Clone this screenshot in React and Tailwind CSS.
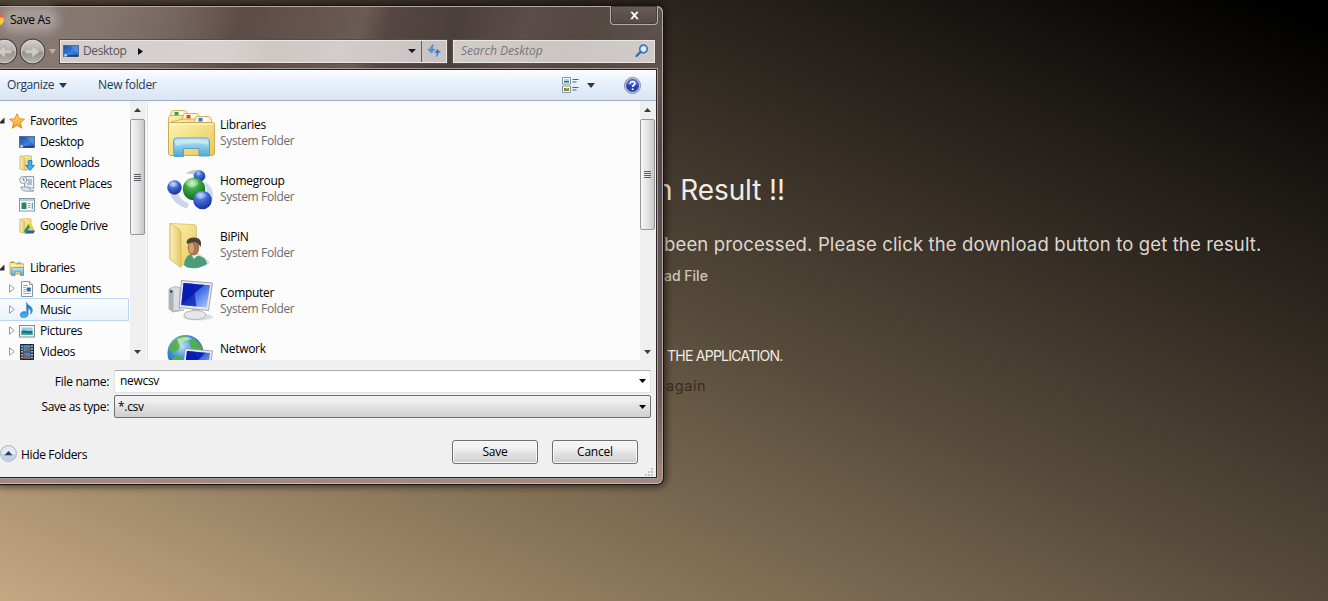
import React from "react";

const Gradients = () => (
  <svg width="0" height="0" className="absolute">
    <defs>
      <linearGradient id="folder" x1="0" y1="0" x2="1" y2="1">
        <stop offset="0" stopColor="#fdf3b4" />
        <stop offset="1" stopColor="#e9c854" />
      </linearGradient>
      <linearGradient id="folderSide" x1="0" y1="0" x2="1" y2="0">
        <stop offset="0" stopColor="#fbf0b8" />
        <stop offset="1" stopColor="#e5c768" />
      </linearGradient>
      <linearGradient id="stand" x1="0" y1="0" x2="0" y2="1">
        <stop offset="0" stopColor="#c3e6f6" />
        <stop offset=".5" stopColor="#86c8e8" />
        <stop offset="1" stopColor="#4fa6d4" />
      </linearGradient>
      <linearGradient id="screen" x1="0" y1="0" x2="1" y2="1">
        <stop offset="0" stopColor="#1430c8" />
        <stop offset=".42" stopColor="#0a1fb4" />
        <stop offset=".46" stopColor="#3c68e4" />
        <stop offset="1" stopColor="#b4d0fa" />
      </linearGradient>
      <linearGradient id="desk" x1="0" y1="0" x2="1" y2="1">
        <stop offset="0" stopColor="#1c4d9e" />
        <stop offset=".6" stopColor="#3f80dc" />
        <stop offset="1" stopColor="#1b4fae" />
      </linearGradient>
      <radialGradient id="blueBall" cx=".4" cy=".25" r=".75">
        <stop offset="0" stopColor="#b4ccf8" />
        <stop offset=".35" stopColor="#4a74dc" />
        <stop offset="1" stopColor="#16309c" />
      </radialGradient>
      <radialGradient id="greenBall" cx=".42" cy=".25" r=".75">
        <stop offset="0" stopColor="#c4f0b8" />
        <stop offset=".35" stopColor="#3fae48" />
        <stop offset="1" stopColor="#0b6a1c" />
      </radialGradient>
      <radialGradient id="globe" cx=".4" cy=".3" r=".75">
        <stop offset="0" stopColor="#b6e4fa" />
        <stop offset=".5" stopColor="#3a8ad4" />
        <stop offset="1" stopColor="#154a96" />
      </radialGradient>
      <linearGradient id="note" x1="0" y1="0" x2="0" y2="1">
        <stop offset="0" stopColor="#1668b8" />
        <stop offset="1" stopColor="#4cb4ee" />
      </linearGradient>
      <linearGradient id="star" x1="0" y1="0" x2="0" y2="1">
        <stop offset="0" stopColor="#ffe27a" />
        <stop offset="1" stopColor="#f79a1c" />
      </linearGradient>
      <linearGradient id="knob" x1="0" y1="0" x2="0" y2="1">
        <stop offset="0" stopColor="#d4d0ce" />
        <stop offset=".48" stopColor="#b4afac" />
        <stop offset=".52" stopColor="#938c89" />
        <stop offset="1" stopColor="#bdb7b4" />
      </linearGradient>
    </defs>
  </svg>
);

const Small = ({ children }) => (
  <svg width="16" height="16" viewBox="0 0 16 16" className="shrink-0">{children}</svg>
);

const StarIcon = () => (
  <Small>
    <path d="M8 .8 10.1 5.7 15.5 6.2 11.4 9.8 12.7 15.2 8 12.3 3.3 15.2 4.6 9.8 .5 6.2 5.9 5.7Z" fill="url(#star)" stroke="#d9811e" strokeWidth=".9" strokeLinejoin="round" />
  </Small>
);
const DesktopIcon = () => (
  <Small>
    <rect x=".5" y="2.5" width="15" height="11" fill="url(#desk)" stroke="#4a5f80" strokeWidth=".8" />
    <path d="M1 12.3h14v1.2H1z" fill="#18305c" />
    <path d="M8 3h7v8C12 9 10 6 8 3Z" fill="#69a5f0" opacity=".45" />
    <circle cx="2.6" cy="12.2" r="1.5" fill="#cfe3f4" stroke="#4c85b8" strokeWidth=".6" />
  </Small>
);
const DownloadsIcon = () => (
  <Small>
    <path d="M1 1.2 8 .6 12.5 1v13L7 15.3 1 14Z" fill="url(#folder)" stroke="#c9a84a" strokeWidth=".6" />
    <path d="M1 1.2 6 3v12.4L1 14Z" fill="url(#folderSide)" stroke="#cdaf58" strokeWidth=".5" />
    <path d="M9.3 5.500h3.600v5h2.600l-4.400 5-4.400-5h2.600Z" fill="#45aaf0" stroke="#1a6fc0" strokeWidth=".8" strokeLinejoin="round" />
  </Small>
);
const RecentIcon = () => (
  <Small>
    <path d="M5.500.6h9.200v11.500H5.500z" fill="#eef2f6" stroke="#7a8c9e" strokeWidth=".9" />
    <path d="M8 4h5M9 6h4M8 8h5" stroke="#5f8cc0" />
    <path d="M2 11h8c0 3 2 4 5 3.700-1 .7-9 .7-10.500 0C3 14 2 13 2 11Z" fill="#e1e6ec" stroke="#7a8c9e" strokeWidth=".8" />
    <circle cx="4.200" cy="4" r="3.500" fill="#f3f6f9" stroke="#7f8d9c" strokeWidth=".9" />
    <path d="M4.200 2v2.200h1.700" stroke="#4a5a6e" fill="none" strokeWidth=".8" />
  </Small>
);
const OneDriveIcon = () => (
  <Small>
    <rect x=".5" y="1.500" width="15" height="12.500" fill="#fbfdfd" stroke="#8197a4" />
    <path d="M1 2h14v2H1z" fill="#b9cbd6" />
    <path d="M2.500 5.500h5v6.500h-5z" fill="#2f7f6d" />
    <path d="M9 6.500h2.500M9 8.500h2.500M9 10.500h2.500" stroke="#7fa89e" />
    <path d="M13.300 5.500v6.500" stroke="#4d86a8" />
  </Small>
);
const GoogleDriveIcon = () => (
  <Small>
    <path d="M1 1.200 8 .6 12 1v13L7 15.300 1 14Z" fill="url(#folder)" stroke="#c9a84a" strokeWidth=".6" />
    <path d="M1 1.200 5.500 3v12.300L1 14Z" fill="url(#folderSide)" stroke="#cdaf58" strokeWidth=".5" />
    <path d="M9.500 6 5 13l1.800 2.600L11 9Z" fill="#1f9d58" />
    <path d="M9.500 6h2.800L16 12.500h-3.200Z" fill="#f7cb27" />
    <path d="M8 12.500h8l-1.600 3.100H6.600Z" fill="#2f55c8" />
  </Small>
);
const LibrariesSmallIcon = () => (
  <Small>
    <path d="M1 2.500h5l1 1.300h7.500V14H1Z" fill="url(#folder)" stroke="#bd9b40" strokeWidth=".8" />
    <path d="M2.200 1.500h2.500v1.400H2.200z" fill="#58a858" />
    <path d="M8 2.400h4v1.400H8z" fill="#6aa4dc" />
    <path d="M1 5.500h13.500" stroke="#fdf6cc" />
    <path d="M2.500 9c0-1 .6-1.500 1.500-1.500h9c1 0 1.500.6 1.500 1.500v6.500h-3v-4.200H6v4.200H2.500Z" fill="url(#stand)" stroke="#4296c4" strokeWidth=".7" />
  </Small>
);
const DocumentsIcon = () => (
  <Small>
    <path d="M2.500.5h8l3 3v12h-11Z" fill="#fdfefe" stroke="#75889a" strokeWidth=".9" />
    <path d="M10.500.5v3h3" fill="#dce6ee" stroke="#75889a" strokeWidth=".8" />
    <path d="M4.300 4.500h4.500M4.300 6.500h2.500M4.300 8.500h2.500M4.300 10.500h2.500M4.300 12.500h7.500" stroke="#8497b4" strokeWidth=".9" />
    <path d="M7.700 6.500h4v4h-4z" fill="#3064a8" />
  </Small>
);
const MusicIcon = () => (
  <Small>
    <path d="M7.600.4c.6 3.300 5.800 3.600 5.800 7.600 0 1.900-.9 3.300-1.900 4.200.8-2.800.3-4.700-2.300-5.900v5.900c0 2-1.800 3.600-4.400 3.600-2.400 0-3.700-1.300-3.700-2.900 0-2 1.900-3.500 4.300-3.500.9 0 1.600.2 2.200.5Z" fill="url(#note)" stroke="#1d78c4" strokeWidth=".5" />
  </Small>
);
const PicturesIcon = () => (
  <Small>
    <rect x=".5" y="2.500" width="15" height="11.500" fill="#fafcfd" stroke="#7d8b96" />
    <path d="M2.500 4.500h11v7.500h-11z" fill="#8fd0ee" />
    <path d="M2.500 8c3-1.500 6 1.200 11-.5V12h-11Z" fill="#1d7088" />
    <path d="M2.500 10.300c4-1 7 .5 11 0V12h-11Z" fill="#46a88c" />
  </Small>
);
const VideosIcon = () => (
  <Small>
    <path d="M1.500.5h13v15h-13z" fill="#2d3742" stroke="#1b242e" />
    <path d="M4.500 1h7v6.500h-7zM4.500 8.500h7V15h-7z" fill="#3f8fcc" />
    <path d="M5 2.500c2 3 4-1 6 2v3H8Zm0 7c3 0 3 4 6 2V15H5Z" fill="#8a5f58" />
    <path d="M3 1.500v14M13 1.500v14" stroke="#eef2f5" strokeWidth="1.300" strokeDasharray="1.500 1.300" />
  </Small>
);

const Big = ({ children }) => (
  <svg width="48" height="48" viewBox="0 0 48 48" className="mt-px shrink-0">{children}</svg>
);
const Tab = ({ x, y, c }) => (
  <g>
    <path d={`M${x} ${y + 6}l1.500-5q.5-1 2-1h11q1.500 0 2 1l1.500 5z`} fill="#fbf2bd" stroke="#c5a245" strokeWidth=".8" />
    <rect x={x + 4} y={y + 1.5} width="9" height="3.500" fill="#fff" />
    <rect x={x + 4.5} y={y + 1.5} width="4" height="3.500" fill={c} />
  </g>
);
const LibrariesIcon = () => (
  <Big>
    <Tab x={3} y={0.5} c="#3d9a3f" />
    <path d="M1.500 8.500q0-3 2-3h18v38h-20Z" fill="url(#folder)" stroke="#c5a245" strokeWidth=".8" />
    <Tab x={15} y={3.5} c="#d24534" />
    <path d="M16 9h16v36H4V12Z" fill="url(#folder)" stroke="#c5a245" strokeWidth=".8" />
    <Tab x={27} y={6.5} c="#3479cc" />
    <path d="M1.500 14.500q0-2 2-2h42q2 0 2 2V43q0 2.500-3 2.500H3.500q-2 0-2-2Z" fill="url(#folder)" stroke="#c9a548" strokeWidth=".9" />
    <path d="M2.500 14h44" stroke="#fffbe0" />
    <path d="M6.500 31q0-3 3-3h29.500q3.500 0 3.500 3.500V46H32V38.500H16.500V46.500H7Z" fill="url(#stand)" stroke="#4ba0cc" strokeWidth=".9" />
    <path d="M8 31q14-3 33 0v4q-12-4-32 1Z" fill="#fff" opacity=".35" />
  </Big>
);
const HomegroupIcon = () => (
  <Big>
    <g transform="translate(0 1.500)">
      <path d="M2 20C2 31 10 38 20 41L22 36C14 33 9 27 11 20Z" fill="#b9c6e0" opacity=".7" />
      <path d="M18 6Q33-3 39 10L32 14Q30 5 18 6Z" fill="#b4bdce" opacity=".8" />
      <path d="M37 14Q49 20 45 34L38 34Q42 24 37 14Z" fill="#c4d0e6" opacity=".75" />
      <circle cx="32.500" cy="8.500" r="5.800" fill="url(#blueBall)" />
      <circle cx="7.500" cy="20" r="7.200" fill="url(#blueBall)" />
      <circle cx="27" cy="21.500" r="11.200" fill="url(#greenBall)" />
      <circle cx="35.500" cy="32.500" r="9.300" fill="url(#blueBall)" />
      <ellipse cx="25" cy="15.500" rx="6.500" ry="4" fill="#fff" opacity=".3" />
      <ellipse cx="34" cy="28" rx="5.500" ry="3" fill="#fff" opacity=".28" />
      <ellipse cx="6.500" cy="17" rx="4.200" ry="2.500" fill="#fff" opacity=".28" />
    </g>
  </Big>
);
const UserFolderIcon = () => (
  <Big>
    <path d="M22 40Q38 48 43 40L30 30Z" fill="#b9bdba" opacity=".5" />
    <path d="M3 1.500 27 2.500Q29.500 3 29.500 5V38L13 44 3 37Z" fill="url(#folder)" stroke="#d3b55e" strokeWidth=".7" />
    <path d="M3 1.500 12 7Q14 9 14 12V45.500L4.500 38.500Q3 37 3 35Z" fill="url(#folderSide)" stroke="#cdae55" strokeWidth=".7" />
    <path d="M17 43Q18 33 25 32L32 34Q39 35 40 42Q33 47 24 46Q19 46 17 43Z" fill="#4b9c79" />
    <path d="M24 32 27 37 31 33Z" fill="#e9f4ee" />
    <ellipse cx="26.500" cy="25.500" rx="5.800" ry="8" fill="#a97650" />
    <ellipse cx="24.500" cy="26" rx="2.500" ry="5" fill="#d0a078" />
    <path d="M20 22Q18 16 27 15.500Q36 16 33.500 25Q31 20.500 28 20Q23 20.500 20 22Z" fill="#4a423d" />
  </Big>
);
const Monitor = () => (
  <g>
    <path d="M14.500 2.500 45.500 5 41.500 32.500 12 29.500Z" fill="#e6e9ec" stroke="#8d949c" strokeWidth=".8" />
    <path d="M16.500 5 43 7.300 39.700 29.500 14.300 27Z" fill="url(#screen)" />
    <path d="M16.500 5 26 5.800 29.500 28.500 14.300 27Z" fill="#0619ac" opacity=".7" />
  </g>
);
const ComputerIcon = () => (
  <Big>
    <ellipse cx="31" cy="39" rx="15" ry="3.500" fill="#b6babd" opacity=".45" />
    <path d="M2 11 8 8.500 13 9.500V32L6 34 2 31Z" fill="#dadde0" stroke="#9ca2a8" strokeWidth=".7" />
    <path d="M2 11 6.500 12V34L2 31Z" fill="#adb2b7" />
    <circle cx="4.200" cy="13.500" r="1.200" fill="#35404a" />
    <path d="M25 31 33 32 32 38H25Z" fill="#c4c8cc" />
    <ellipse cx="28" cy="37" rx="11" ry="4.500" fill="#e5e7e9" stroke="#a6abb0" strokeWidth=".8" />
    <Monitor />
    <path d="M5 33.500 17 32" stroke="#b3b8bc" strokeWidth="1.500" />
  </Big>
);
const NetworkIcon = () => (
  <Big>
    <circle cx="18.500" cy="19" r="18" fill="url(#globe)" />
    <path d="M8 6Q13 1 19 2L18 7 13 9 12 15 7 19 2 16Q3 10 8 6ZM25 4Q33 8 36 15L30 17 24 13 22 7ZM5 24 12 21 16 27 13 34Q7 31 5 24Z" fill="#53b140" opacity=".9" />
    <path d="M10 5Q18 1 25 5Q18 6 12 11Z" fill="#dbf6c4" opacity=".7" />
    <path d="M18 14.500 45.500 17 41.500 46 15 43Z" fill="#e6e9ec" stroke="#8d949c" strokeWidth=".8" />
    <path d="M20 17 43 19 40 44 17 42Z" fill="url(#screen)" />
    <path d="M20 17 28 17.800 33 44 17 42Z" fill="#0619ac" opacity=".75" />
  </Big>
);

const Down = ({ className, w = 7, h = 4 }) => (
  <svg width={w} height={h} viewBox="0 0 8 4" preserveAspectRatio="none" className={className}>
    <path d="M0 0h8L4 4Z" fill="currentColor" />
  </svg>
);

const TreeHead = ({ icon, label }) => (
  <div className="flex h-[21px] items-center">
    <svg width="7" height="7" viewBox="0 0 7 7" className="-ml-0.5 mr-1 shrink-0"><path d="M6.500 .5v6h-6Z" fill="#2b2b2b" /></svg>
    {icon}
    <span className="ml-[5px] tracking-[-0.4px]">{label}</span>
  </div>
);
const TreeItem = ({ icon, label, arrow, active }) => (
  <div className={active ? "-my-px flex h-[23px] w-[129px] items-center border border-l-0 border-[#b9d6f3] bg-gradient-to-b from-[#fafcfe] to-[#eaf3fc]" : "flex h-[21px] items-center"}>
    <div className="flex w-[19px] shrink-0 justify-center pl-[5px]">
      {arrow && <svg width="6" height="9" viewBox="0 0 6 9"><path d="M.5.8v7.400L5.300 4.500Z" fill="#fff" stroke="#8f8f8f" strokeWidth=".9" /></svg>}
    </div>
    {icon}
    <span className="ml-[5px] tracking-[-0.35px]">{label}</span>
  </div>
);

const Scrollbar = ({ size }) => (
  <div className="flex w-4 shrink-0 flex-col items-start bg-[#efefef]">
    <div className="flex h-[18px] w-[15px] items-center justify-center"><Down w={7} h={4} className="rotate-180 text-[#3c3c3c]" /></div>
    <div className={"flex w-[15px] flex-col items-center justify-center gap-px rounded-[2px] border border-[#979797] bg-gradient-to-r from-[#f6f6f6] via-[#e4e4e6] to-[#c6c7cb] " + size}>
      {[0, 1, 2, 3].map((i) => <div key={i} className="h-px w-[7px] bg-[#5a5e64]" />)}
    </div>
    <div className="flex-1" />
    <div className="flex h-[17px] w-[15px] items-center justify-center"><Down w={7} h={4} className="text-[#3c3c3c]" /></div>
  </div>
);

const Place = ({ icon, name, sub }) => (
  <div className="flex h-14 items-start">
    {icon}
    <div className="ml-[5px] mt-2 leading-4">
      <div className="tracking-[-0.3px] text-black">{name}</div>
      {sub && <div className="tracking-[-0.35px] text-[#6d6d6d]">{sub}</div>}
    </div>
  </div>
);

const NavKnob = ({ flip, className }) => (
  <svg width="27" height="27" viewBox="0 0 27 27" className={className}>
    <circle cx="13.500" cy="13.500" r="12.300" fill="url(#knob)" stroke="#4d4542" strokeWidth="1.200" />
    <circle cx="13.500" cy="13.500" r="11.200" fill="none" stroke="#ddd8d5" strokeWidth=".9" opacity=".8" />
    <path transform={flip ? "rotate(180 13.5 13.5)" : undefined} d="M6.500 11.800h6.500V7.500l7.500 6-7.500 6v-4.300H6.500Z" fill="#d0cbc8" stroke="#b0a9a5" strokeWidth=".7" />
  </svg>
);

const PushButton = ({ children }) => (
  <button className="h-6 w-[86px] rounded-[3px] border border-[#707070] bg-gradient-to-b from-[#f3f3f3] from-30% via-[#e2e2e2] via-55% to-[#cfcfcf] pb-px text-[12px] leading-none tracking-[-0.2px] shadow-[inset_0_0_0_1px_#fafafa]">{children}</button>
);

function SaveDialog() {
  return (
    <div className="absolute left-0 top-[5px] flex h-[480px] w-[664px] flex-col rounded-r-[7px] border border-l-0 border-[#181310] bg-[linear-gradient(180deg,#62544f_0%,#66574f_14%,#55494a_30%,#64575a_55%,#6a5c58_80%,#a58980_100%)] font-['Open_Sans','Noto_Sans',sans-serif] text-[12px] text-black shadow-[inset_-1px_1px_0_#b3a8a3,inset_0_-1px_0_#c8bcb6,0_0_7px_2px_rgba(15,10,6,0.6)]">
      <div className="flex h-[63px] flex-col rounded-tr-[6px] bg-[linear-gradient(105deg,#8a7b75_0%,#84766f_16%,#75665f_26%,#6b5a54_31%,#5c4b47_36%,#66554f_48%,#6b5b55_54%,#554643_58%,#4b3f3c_68%,#5b4c49_78%,#544843_88%,#5f5350_100%)] shadow-[inset_-1px_1px_0_#b3a8a3]">
        <div className="flex h-[31px] items-start">
          <div className="mt-[7px] h-[13px] w-1 overflow-hidden">
            <div className="-ml-[9px] size-[13px] rounded-full border-t-4 border-[#e8492f] bg-[#fbc21c]" />
          </div>
          <div className="ml-0.5 mt-[5px] rounded-full bg-white/25 px-1 leading-[17px] tracking-[-0.3px] shadow-[0_0_9px_5px_rgba(255,255,255,0.25)]">Save As</div>
          <div className="flex-1" />
          <div className="mr-[5px] flex h-[19px] w-[48px] items-center justify-center rounded-b-[4px] border border-t-0 border-[#b5aba7] bg-gradient-to-b from-[#75686580] to-[#50454280] shadow-[inset_0_0_0_1px_#483e3b]">
            <svg width="11" height="9" viewBox="0 0 11 9"><path d="M.8.5h3l1.700 2.200L7.200.5h3L7.100 4.400l3.300 4.100h-3L5.500 6 3.600 8.500h-3L3.900 4.400Z" fill="#fff" stroke="#46403f" strokeWidth=".5" /></svg>
          </div>
        </div>
        <div className="flex h-7 items-center">
          <NavKnob flip className="-ml-[9px] shrink-0" />
          <NavKnob className="ml-px shrink-0" />
          <Down w={7} h={5} className="ml-[3px] shrink-0 text-[#bcb2ad]" />
          <div className="ml-1 flex h-[23px] w-[387px] shrink-0 items-stretch border border-[#ece7e4] bg-[linear-gradient(90deg,#d3cecb_0%,#d7d2cf_42%,#cec7c4_55%,#d2ccca_72%,#c8c2c0_100%)] text-[#555] shadow-[0_0_0_1px_#574b47]">
            <div className="flex flex-1 items-center pl-0.5">
              <DesktopIcon />
              <span className="ml-[4px] tracking-[-0.4px]">Desktop</span>
              <svg width="5" height="7" viewBox="0 0 5 7" className="ml-[11px]"><path d="M0 0 5 3.500 0 7Z" fill="#111" /></svg>
              <div className="flex-1" />
              <Down w={8} h={4} className="mr-[5px] text-[#15123a]" />
            </div>
            <div className="flex w-[25px] items-center justify-center border-l border-[#675d5a]">
              <svg width="15" height="14" viewBox="0 0 15 14">
                <path d="M7 .8C4.500.8 3.400 2.500 3.400 5H.6L4.500 9.200 8.300 5H5.700C5.700 3 6 1.800 7 .8Z" fill="#4a97d6" stroke="#3f83c4" strokeWidth=".3" />
                <path d="M8 13.200c2.500 0 3.600-1.700 3.600-4.200h2.800l-3.900-4.200L6.700 9h2.600c0 2-.3 3.200-1.300 4.200Z" fill="#3a76bd" stroke="#dfe7ee" strokeWidth=".4" />
              </svg>
            </div>
          </div>
          <div className="ml-1.5 flex h-[23px] w-[202px] shrink-0 items-center border border-[#ece7e4] bg-[linear-gradient(90deg,#d2ccc9,#cbc4c2_55%,#d0cbc9)] pl-2 pr-[5px] text-[#777] shadow-[0_0_0_1px_#574b47]">
            <span className="-ml-px flex-1 italic">Search Desktop</span>
            <svg width="14" height="14" viewBox="0 0 14 14"><circle cx="8.500" cy="5" r="3.800" fill="#dfeaf5" stroke="#3a78bd" strokeWidth="1.700" /><path d="M5.600 7.900 1.500 12" stroke="#2f6bb4" strokeWidth="2.200" strokeLinecap="round" /></svg>
          </div>
        </div>
      </div>

      <div className="flex h-[409px] w-[657px] flex-col border-r border-t border-b border-[#2c2421] bg-[#f0f0f0] shadow-[0_0_0_1px_#a79b97]">
        <div className="flex h-[31px] shrink-0 items-center border-b border-[#a0afc3] bg-gradient-to-b from-[#fbfdff] via-[#e6eff9] via-50% to-[#d9e5f3] pl-[7px] text-[#1e395b]">
          <span className="tracking-[-0.4px]">Organize</span>
          <Down w={8} h={5} className="ml-[5px]" />
          <span className="ml-[31px] tracking-[-0.3px]">New folder</span>
          <div className="flex-1" />
          <svg width="17" height="16" viewBox="0 0 17 16">
            <path d="M.5.500h8v6.500h-8zM.5 9h8v6.500h-8z" fill="#fff" stroke="#8596a8" />
            <path d="M2 4h5v1.500H2z" fill="#2c6f60" /><path d="M2 2h5v2H2z" fill="#a9d3ea" />
            <path d="M2 11h5v3H2z" fill="#6d8a34" /><path d="M4 11h1.500v1.500H4z" fill="#e0c040" />
            <path d="M10.500 2.500h6M10.500 5h4M10.500 10.500h6M10.500 13h4" stroke="#51647d" />
          </svg>
          <Down w={8} h={5} className="ml-2" />
          <svg width="17" height="17" viewBox="0 0 17 17" className="ml-[29px] mr-[15px]">
            <circle cx="8.500" cy="8.500" r="8" fill="#c7cede" stroke="#76809a" strokeWidth=".9" />
            <circle cx="8.500" cy="8.500" r="6.500" fill="#2545b4" />
            <path d="M2.500 7.500A6.100 6.100 0 0 1 14.500 7.500Q8.500 9.500 2.500 7.500Z" fill="#7592e2" opacity=".55" />
            <path d="M6.100 6.700Q6.200 4.500 8.600 4.500 10.900 4.600 10.900 6.500 10.900 7.600 9.700 8.300 8.700 8.900 8.600 10" fill="none" stroke="#fff" strokeWidth="1.600" />
            <circle cx="8.600" cy="12.300" r="1" fill="#fff" />
          </svg>
        </div>

        <div className="flex h-[259px] shrink-0 overflow-hidden bg-[#fcfcfc]">
          <div className="w-[130px] shrink-0 pt-[9px]">
            <TreeHead icon={<StarIcon />} label="Favorites" />
            <TreeItem icon={<DesktopIcon />} label="Desktop" />
            <TreeItem icon={<DownloadsIcon />} label="Downloads" />
            <TreeItem icon={<RecentIcon />} label="Recent Places" />
            <TreeItem icon={<OneDriveIcon />} label="OneDrive" />
            <TreeItem icon={<GoogleDriveIcon />} label="Google Drive" />
            <div className="h-[21px]" />
            <TreeHead icon={<LibrariesSmallIcon />} label="Libraries" />
            <TreeItem arrow icon={<DocumentsIcon />} label="Documents" />
            <TreeItem arrow active icon={<MusicIcon />} label="Music" />
            <TreeItem arrow icon={<PicturesIcon />} label="Pictures" />
            <TreeItem arrow icon={<VideosIcon />} label="Videos" />
          </div>
          <Scrollbar size="h-[116px]" />
          <div className="ml-px w-px shrink-0 bg-[#d6e3f2]" />
          <div className="flex-1 pl-[19px] pt-2">
            <Place icon={<LibrariesIcon />} name="Libraries" sub="System Folder" />
            <Place icon={<HomegroupIcon />} name="Homegroup" sub="System Folder" />
            <Place icon={<UserFolderIcon />} name="BiPiN" sub="System Folder" />
            <Place icon={<ComputerIcon />} name="Computer" sub="System Folder" />
            <Place icon={<NetworkIcon />} name="Network" />
          </div>
          <Scrollbar size="h-[111px]" />
        </div>

        <div className="flex flex-1 flex-col pt-2.5">
          <div className="flex h-[23px] items-center">
            <div className="w-[109px] text-right tracking-[-0.3px]">File name:</div>
            <div className="ml-[5px] flex h-[23px] w-[537px] items-center border border-[#e2e3e6] border-t-[#abadb3] bg-white pl-[5px] pr-1 pb-px">
              <span className="flex-1 tracking-[-0.3px]">newcsv</span>
              <Down w={7} h={4} />
            </div>
          </div>
          <div className="mt-0.5 flex h-[23px] items-center">
            <div className="w-[109px] text-right tracking-[-0.35px]">Save as type:</div>
            <div className="ml-[5px] flex h-[23px] w-[537px] items-center rounded-[2px] border border-[#707070] bg-gradient-to-b from-[#f1f1f1] from-20% via-[#e0e0e0] via-55% to-[#cfcfcf] pl-[3px] pr-1">
              <span className="flex-1 tracking-[-0.3px]">*.csv</span>
              <Down w={7} h={4} />
            </div>
          </div>
          <div className="mt-[22px] flex h-6 items-start">
            <svg width="17" height="17" viewBox="0 0 17 17" className="mt-[5px] shrink-0">
              <circle cx="8.500" cy="8.500" r="7.900" fill="#e4ebf2" stroke="#9fb0c3" />
              <path d="M1.500 9h14A7 7 0 0 1 1.500 9Z" fill="#c4d3e2" />
              <path d="M4.500 10.200 8.500 6l4 4.200Z" fill="#253a70" />
            </svg>
            <span className="ml-1 mt-[6px] leading-[17px] tracking-[-0.35px]">Hide Folders</span>
            <div className="flex-1" />
            <div className="flex gap-3.5 pr-[18px]">
              <PushButton>Save</PushButton>
              <PushButton>Cancel</PushButton>
            </div>
          </div>
          <svg width="10" height="10" viewBox="0 0 10 10" className="ml-auto mr-0.5 mt-[3px]"><path d="M7 1h2v2H7zM7 4h2v2H7zM4 4h2v2H4zM1 7h2v2H1zM4 7h2v2H4zM7 7h2v2H7z" fill="#c6c6c6" /></svg>
        </div>
      </div>
    </div>
  );
}

export default function App() {
  return (
    <div className="relative h-[601px] w-[1328px] overflow-hidden bg-[linear-gradient(to_top_right,#c4a882_0%,#8a765b_25%,#564b3a_50%,#2a241e_75%,#000_98%)] font-['Inter',sans-serif]">
      <Gradients />
      <main className="flex flex-col whitespace-nowrap pl-[656px] pt-[170px] text-[#f3ece4]">
        <h1 className="h-10 text-[28px] leading-10 tracking-[-0.1px]">n Result !!</h1>
        <p className="mt-5 h-7 pl-2 text-[18.5px] leading-7 tracking-[0.14px] text-[#ddd6cd]">been processed. Please click the download button to get the result.</p>
        <p className="mt-[7px] h-[22px] pl-2 text-[14px] font-medium leading-[22px] text-[#cfc8bf]">ad File</p>
        <p className="mt-[58px] h-[22px] pl-[11px] text-[14px] leading-[22px] tracking-[-0.75px]">THE APPLICATION.</p>
        <p className="mt-2 h-[22px] pl-2.5 text-[14.5px] leading-[22px] tracking-[0.6px] text-[#382d25]">again</p>
      </main>
      <SaveDialog />
    </div>
  );
}
